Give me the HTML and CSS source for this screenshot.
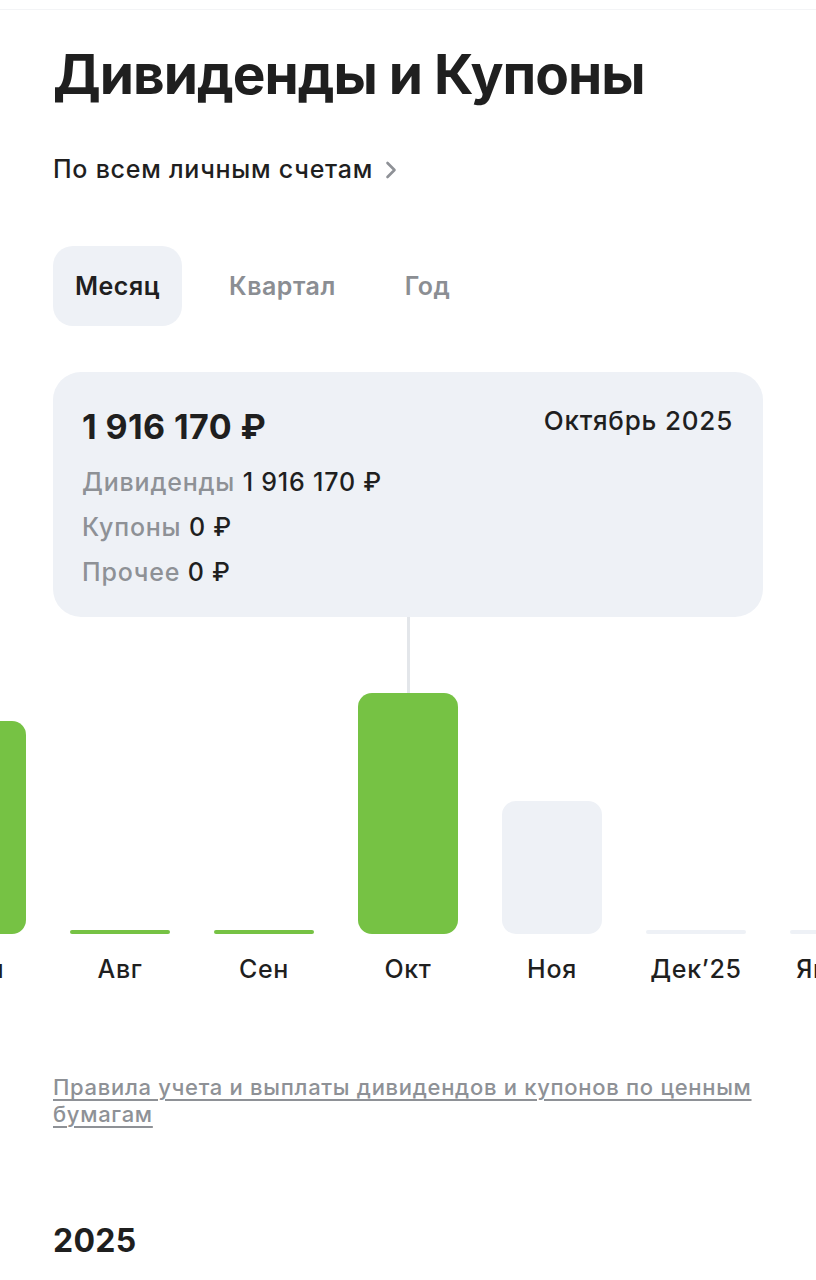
FILE: index.html
```html
<!DOCTYPE html>
<html lang="ru">
<head>
<meta charset="utf-8">
<link rel="stylesheet" href="styles.css">
</head>
<body>
<div class="topline"></div>
<main class="page">
  <h1 class="title">Дивиденды и Купоны</h1>
  <div class="accounts">По всем личным счетам
    <svg class="chev" width="12" height="20" viewBox="0 0 12 20"><path d="M2.5 3l7 7-7 7" fill="none" stroke="#8e9196" stroke-width="2.6" stroke-linecap="round" stroke-linejoin="round"/></svg>
  </div>
  <div class="tabs">
    <div class="tab active">Месяц</div>
    <div class="tab">Квартал</div>
    <div class="tab">Год</div>
  </div>
  <div class="card">
    <div class="card-head">
      <div class="total">1 916 170 ₽</div>
      <div class="period">Октябрь 2025</div>
    </div>
    <div class="row"><span class="lbl">Дивиденды</span> <span class="val">1 916 170 ₽</span></div>
    <div class="row"><span class="lbl">Купоны</span> <span class="val">0 ₽</span></div>
    <div class="row"><span class="lbl">Прочее</span> <span class="val">0 ₽</span></div>
  </div>
</main>
<div class="chart">
  <div class="chart-row">
    <div class="col"><div class="bar green" style="height:213px"></div><div class="mon">Июл</div></div>
    <div class="col"><div class="bar green thin" style="height:4px"></div><div class="mon">Авг</div></div>
    <div class="col"><div class="bar green thin" style="height:4px"></div><div class="mon">Сен</div></div>
    <div class="col selected"><div class="conn"></div><div class="bar green" style="height:241px"></div><div class="mon">Окт</div></div>
    <div class="col"><div class="bar grey" style="height:133px"></div><div class="mon">Ноя</div></div>
    <div class="col"><div class="bar grey thin" style="height:4px"></div><div class="mon">Дек’25</div></div>
    <div class="col"><div class="bar grey thin" style="height:4px"></div><div class="mon">Янв’26</div></div>
  </div>
</div>
<section class="page bottom">
  <a class="rules" href="#">Правила учета и выплаты дивидендов и купонов по ценным бумагам</a>
  <h2 class="year">2025</h2>
</section>
</body>
</html>
```
FILE: styles.css
```css
* { box-sizing: border-box; }
html, body { margin: 0; padding: 0; background: #fff; }
body {
  font-family: "Inter", "Noto Sans", sans-serif;
  color: #1f1f1f;
  width: 816px;
  overflow: hidden;
}
.topline { height: 10px; border-bottom: 1px solid #f3f4f6; }
.page { padding: 0 53px; }
.title {
  margin: 32px 0 0;
  font-size: 55px;
  font-weight: 700;
  line-height: 64px;
  letter-spacing: -1px;
  color: #1f1f1f;
}
.accounts {
  margin-top: 48px;
  font-size: 25px;
  font-weight: 500;
  line-height: 30px;
  letter-spacing: 0.75px;
  display: flex;
  align-items: center;
  gap: 12px;
}
.chev { margin-top: 1px; }
.tabs {
  margin-top: 62px;
  display: flex;
  align-items: center;
}
.tab {
  height: 80px;
  display: flex;
  align-items: center;
  padding: 0 22px;
  border-radius: 20px;
  font-size: 25px;
  font-weight: 600;
  letter-spacing: 0.5px;
  color: #8b8e93;
  margin-right: 25px;
}
.tab.active { background: #eef1f6; color: #1f1f1f; }
.card {
  margin-top: 46px;
  background: #eef1f6;
  border-radius: 28px;
  padding: 35px 30px 0 29px;
  height: 245px;
}
.card-head { display: flex; justify-content: space-between; align-items: flex-start; }
.total { font-size: 34px; font-weight: 700; line-height: 40px; letter-spacing: 0.4px; }
.period { font-size: 26px; font-weight: 500; line-height: 30px; margin-top: -1px; letter-spacing: 0.8px; }
.row { font-size: 25px; font-weight: 500; line-height: 30px; margin-top: 15px; letter-spacing: 0.8px; }
.card-head + .row { margin-top: 20px; }
.lbl { color: #8e9196; }
.val { color: #1f1f1f; }
.chart { width: 816px; overflow: hidden; }
.chart-row { display: flex; margin-left: -96px; height: 367px; }
.col {
  flex: 0 0 144px;
  display: flex;
  flex-direction: column;
  align-items: center;
  justify-content: flex-end;
}
.conn { width: 3px; flex: 1; background: #e3e6ea; }
.bar { width: 100px; border-radius: 14px; }
.bar.thin { border-radius: 2px; }
.bar.green { background: #76c244; }
.bar.grey { background: #eef1f6; }
.mon {
  margin-top: 20px;
  height: 30px;
  font-size: 25px;
  font-weight: 500;
  line-height: 30px;
  letter-spacing: 0.7px;
  white-space: nowrap;
  color: #1f1f1f;
}
.bottom { padding-top: 90px; }
.rules {
  display: block;
  font-size: 22px;
  font-weight: 500;
  line-height: 27px;
  color: #8e9196;
  text-decoration: underline;
  text-decoration-thickness: 2px;
  text-underline-offset: 4px;
  letter-spacing: 0.7px;
}
.year {
  margin: 93px 0 0;
  font-size: 32px;
  font-weight: 700;
  line-height: 40px;
  letter-spacing: 0.3px;
}
```
